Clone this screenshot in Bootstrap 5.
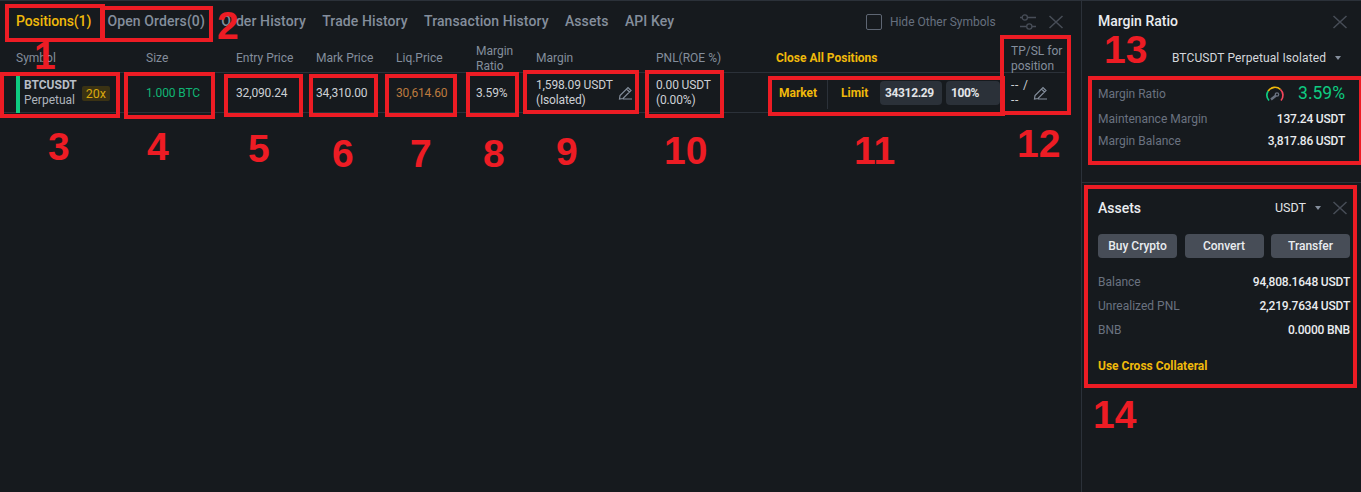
<!DOCTYPE html>
<html lang="en"><head><meta charset="utf-8"><title>Positions</title>
<link rel="stylesheet" href="https://cdn.jsdelivr.net/npm/bootstrap@5.3.0/dist/css/bootstrap.min.css">
<style>
html,body{height:100%}
body{background:#161a1e;color:#b7bdc6;font-family:Roboto,"Liberation Sans",sans-serif;font-size:12px;overflow:hidden}
.shell{height:492px;position:relative;border-top:1px solid #2b3139;width:1361px}
.main-pane{width:1082px;border-right:1px solid #2b3139;flex:none}
.side-pane{flex:1;min-width:0}
.tabs-bar{height:41px;padding:0 17px 0 16px;gap:16.3px;font-size:14px;font-weight:500;color:#848e9c;letter-spacing:.1px}
.tab-on{color:#f0b90b;letter-spacing:-.1px}
.hide-box{width:16px;height:16px;border:1px solid #5e6673;border-radius:2px;margin-right:8px}
.hide-lbl{font-size:12px;color:#66707e;font-weight:400;margin-right:7px;letter-spacing:0}
.tool-icons{gap:11px}
.pos-grid{display:grid;grid-template-columns:130px 90px 80px 80px 80px 60px 120px 120px 235px 1fr;padding-left:16px;margin-right:16px}
.head-row{height:31px;color:#848e9c;line-height:15px;align-items:center;border-bottom:1px solid #2b3139}
.two-line{padding-top:2px}
.data-row{height:40px;padding-top:1px;align-items:center;border-bottom:1px solid #2b3139;color:#cdd0d5;line-height:15px;letter-spacing:-.15px}
.sym-cell{display:flex;align-items:center;height:100%;position:relative;letter-spacing:0}
.long-bar{width:4px;height:37px;background:#0ecb81;flex:none;margin-right:4px;align-self:flex-end;margin-bottom:-1px}
.sym-name{font-weight:700;color:#b7bdc6}
.sym-sub{color:#aeb4bc}
.lev-tag{background:#3a3214;color:#d9a80c;padding:0 4px;font-size:12.5px;line-height:15px;border-radius:2px;margin-left:5px}
.pen-ic{width:16px;height:16px;flex:none;color:#848e9c}
.pen-row{padding-right:23px}
.buy-txt{color:#10b574}
.liq-txt{color:#bd7a3e}
.dash-txt{width:21px;letter-spacing:.8px}
.gold-b{color:#f0b90b;font-weight:700}
.close-ctl{color:#f0b90b;font-weight:700;display:flex;align-items:center;height:100%;letter-spacing:0}
.mkt{width:52px;height:32px;padding-left:3px;display:flex;align-items:center;border-right:1px solid #2b3139;margin-right:13px}
.lim{width:39px}
.val-box{background:#2b3139;border-radius:4px;height:24px;display:flex;align-items:center;color:#e2e4e7;padding-left:5px;margin-right:4px;letter-spacing:-.35px}
.val-a{width:62px}
.val-b{width:54px}
.panel-title{font-size:14px;font-weight:500;color:#eaecef}
.x-ic{width:16px;height:16px;color:#474d57;flex:none}
.kv{display:flex;justify-content:space-between;align-items:center;color:#eaecef;font-weight:500;letter-spacing:-.2px}
.kv>span:first-child{color:#6a7280;font-weight:400;letter-spacing:0}
.side-a{padding:0 13px 0 16px;height:182px;border-bottom:1px solid #2b3139}
.side-b{padding:0 11px 0 16px}
.top-rowa{height:41px}
.pick-row{height:32px;color:#d5d8dc;padding-right:7px;gap:9px;letter-spacing:.1px}
.kv-a{margin-right:3px;height:22px}
.kv-first{height:29px;margin-top:5px}
.ratio-val{font-size:17.5px;font-weight:400;color:#0ecb81!important;letter-spacing:0}
.gauge{margin-right:13px}
.top-rowb{height:50px}
.usdt-pick{color:#e2e4e7;font-size:12.5px}
.caret-gap{margin-left:9px}
.x-b{margin-left:11px;margin-right:2px}
.btn-row{margin:1px 0 12px}
.grey-btn{background:#474d57;color:#eaecef;border-radius:4px;height:24px;font-size:12px;font-weight:500;border:0;padding:0;width:79px}
.kv-b{height:24px}
.cross-link{margin-top:15px}
.caret-dn{width:0;height:0;border-left:3.5px solid transparent;border-right:3.5px solid transparent;border-top:4px solid #848e9c}
.mk-b{position:absolute;border:solid #ed1c24;border-width:4.5px}
.mk-n{position:absolute;color:#ed1c24;font:700 39px/1 "Liberation Sans",sans-serif}
.b1{left:5px;top:3px;width:100px;height:38px}
.b2{left:100px;top:5px;width:113px;height:36px}
.b3{left:0;top:71px;width:120px;height:46px}
.b4{left:124px;top:71px;width:91px;height:47px}
.b5{left:224px;top:73px;width:79px;height:43px}
.b6{left:309px;top:73px;width:69px;height:43px}
.b7{left:385px;top:73px;width:72px;height:43px}
.b8{left:466px;top:71px;width:53px;height:45px}
.b9{left:523px;top:69px;width:116px;height:44px}
.b10{left:645px;top:69px;width:79px;height:48px}
.b11{left:768px;top:75px;width:237px;height:40px}
.b12{left:1000px;top:34px;width:71px;height:80px}
.b13{left:1088px;top:75px;width:275px;height:89px}
.b14{left:1084px;top:184px;width:273px;height:203px}
.n1{left:34px;top:35px}
.n2{left:217px;top:5px}
.n3{left:48px;top:126px}
.n4{left:147px;top:126px}
.n5{left:248px;top:128px}
.n6{left:332px;top:133px}
.n7{left:410px;top:133px}
.n8{left:483px;top:133px}
.n9{left:556px;top:131px}
.n10{left:664px;top:130px}
.n11{left:854px;top:130px}
.n12{left:1017px;top:123px}
.n13{left:1104px;top:29px}
.n14{left:1093px;top:394px}
</style></head><body>
<div class="shell d-flex">
<div class="main-pane">
 <div class="tabs-bar d-flex align-items-center">
  <span class="tab-on">Positions(1)</span><span>Open Orders(0)</span><span>Order History</span><span>Trade History</span><span>Transaction History</span><span>Assets</span><span>API Key</span>
  <span class="ms-auto d-flex align-items-center hide-lbl"><span class="hide-box"></span>Hide Other Symbols</span>
  <span class="d-flex align-items-center tool-icons"><svg width="18" height="16" viewBox="0 0 18 16" fill="none" stroke="#474d57" stroke-width="1.3"><path d="M1 3.5H3M8.5 3.5H17M1 12.5H7.5M13 12.5H17"/><circle cx="5.8" cy="3.5" r="2.6"/><circle cx="10.3" cy="12.5" r="2.6"/></svg><svg class="x-ic" viewBox="0 0 16 16" fill="none" stroke="currentColor" stroke-width="1.5"><path d="M1.5 2L14.5 14M14.5 2L1.5 14"/></svg></span>
 </div>
 <div class="pos-grid head-row">
  <div>Symbol</div><div>Size</div><div>Entry Price</div><div>Mark Price</div><div>Liq.Price</div><div class="two-line">Margin<br>Ratio</div><div>Margin</div><div>PNL(ROE %)</div><div class="gold-b">Close All Positions</div><div class="two-line">TP/SL for<br>position</div>
 </div>
 <div class="pos-grid data-row">
  <div class="sym-cell"><span class="long-bar"></span><div><div class="sym-name">BTCUSDT</div><div class="sym-sub">Perpetual</div></div><span class="lev-tag">20x</span></div>
  <div class="buy-txt">1.000 BTC</div>
  <div>32,090.24</div><div>34,310.00</div><div class="liq-txt">30,614.60</div><div>3.59%</div>
  <div class="d-flex align-items-center justify-content-between pen-row"><div>1,598.09 USDT<br>(Isolated)</div><svg class="pen-ic" viewBox="0 0 16 16" fill="none" stroke="currentColor" stroke-width="1.2"><path d="M2.5 14L3 10.5L11 2.5L14 5.5L6 13.5ZM9.5 4L12.5 7M6 14H15"/></svg></div>
  <div>0.00 USDT<br>(0.00%)</div>
  <div class="close-ctl"><span class="mkt">Market</span><span class="lim">Limit</span><span class="val-box val-a">34312.29</span><span class="val-box val-b">100%</span></div>
  <div class="d-flex align-items-center"><div class="dash-txt">-- /<br>--</div><svg class="pen-ic" viewBox="0 0 16 16" fill="none" stroke="currentColor" stroke-width="1.2"><path d="M2.5 14L3 10.5L11 2.5L14 5.5L6 13.5ZM9.5 4L12.5 7M6 14H15"/></svg></div>
 </div>
</div>
<div class="side-pane d-flex flex-column">
 <div class="side-a">
  <div class="d-flex justify-content-between align-items-center top-rowa"><span class="panel-title">Margin Ratio</span><svg class="x-ic" viewBox="0 0 16 16" fill="none" stroke="currentColor" stroke-width="1.5"><path d="M1.5 2L14.5 14M14.5 2L1.5 14"/></svg></div>
  <div class="d-flex justify-content-end align-items-center pick-row">BTCUSDT Perpetual Isolated<span class="caret-dn"></span></div>
  <div class="kv kv-a kv-first"><span>Margin Ratio</span><span class="d-flex align-items-center ratio-val"><svg class="gauge" width="20" height="18" viewBox="0 0 20 18" fill="none" stroke-width="1.7"><path d="M4 15.5A8 8 0 0 1 3.2 6" stroke="#0ecb81"/><path d="M3.2 6A8 8 0 0 1 15.5 4.5" stroke="#f0b90b"/><path d="M15.5 4.5A8 8 0 0 1 16 15.5" stroke="#f6465d"/><path d="M6 14.5L11 10.5" stroke="#6a7280" stroke-width="2.4"/><circle cx="12" cy="9.5" r="1.7" stroke="#6a7280" stroke-width="1.3"/></svg>3.59%</span></div>
  <div class="kv kv-a"><span>Maintenance Margin</span><span>137.24 USDT</span></div>
  <div class="kv kv-a"><span>Margin Balance</span><span>3,817.86 USDT</span></div>
 </div>
 <div class="side-b">
  <div class="d-flex align-items-center top-rowb"><span class="panel-title">Assets</span><span class="ms-auto usdt-pick">USDT</span><span class="caret-dn caret-gap"></span><svg class="x-ic x-b" viewBox="0 0 16 16" fill="none" stroke="currentColor" stroke-width="1.5"><path d="M1.5 2L14.5 14M14.5 2L1.5 14"/></svg></div>
  <div class="d-flex justify-content-between btn-row"><button class="grey-btn">Buy Crypto</button><button class="grey-btn">Convert</button><button class="grey-btn">Transfer</button></div>
  <div class="kv kv-b"><span>Balance</span><span>94,808.1648 USDT</span></div>
  <div class="kv kv-b"><span>Unrealized PNL</span><span>2,219.7634 USDT</span></div>
  <div class="kv kv-b"><span>BNB</span><span>0.0000 BNB</span></div>
  <div class="gold-b cross-link">Use Cross Collateral</div>
 </div>
</div>
<div class="mk-b b1"></div><div class="mk-b b2"></div><div class="mk-b b3"></div><div class="mk-b b4"></div><div class="mk-b b5"></div><div class="mk-b b6"></div><div class="mk-b b7"></div><div class="mk-b b8"></div><div class="mk-b b9"></div><div class="mk-b b10"></div><div class="mk-b b11"></div><div class="mk-b b12"></div><div class="mk-b b13"></div><div class="mk-b b14"></div>
<div class="mk-n n1">1</div><div class="mk-n n2">2</div><div class="mk-n n3">3</div><div class="mk-n n4">4</div><div class="mk-n n5">5</div><div class="mk-n n6">6</div><div class="mk-n n7">7</div><div class="mk-n n8">8</div><div class="mk-n n9">9</div><div class="mk-n n10">10</div><div class="mk-n n11">11</div><div class="mk-n n12">12</div><div class="mk-n n13">13</div><div class="mk-n n14">14</div>
</div>
</body></html>
